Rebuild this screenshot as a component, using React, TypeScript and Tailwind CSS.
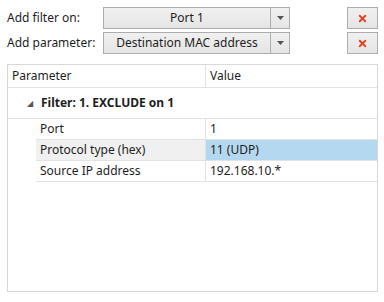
import { X } from "lucide-react";

const font = { fontFamily: '"Noto Sans", "Open Sans", sans-serif' };

function Combo({ value }: { value: string }) {
  return (
    <div className="flex h-[22px] w-[187px] border border-[#adadad] bg-gradient-to-b from-[#f0f0f0] to-[#e5e5e5] text-[12px] text-[#1e1e1e]">
      <div className="flex flex-1 items-center justify-center">{value}</div>
      <div className="flex w-[19px] items-center justify-center border-l border-[#adadad]">
        <svg width="7" height="4" viewBox="0 0 7 4">
          <path d="M0 0h7L3.5 4z" fill="#555" />
        </svg>
      </div>
    </div>
  );
}

function RemoveButton() {
  return (
    <button className="ml-auto flex h-[22px] w-[31px] items-center justify-center border border-[#adadad] bg-gradient-to-b from-[#f0f0f0] to-[#e5e5e5]">
      <X className="h-[11px] w-[11px] text-[#e8401c]" strokeWidth={4} />
    </button>
  );
}

const rows = [
  { name: "Port", value: "1" },
  { name: "Protocol type (hex)", value: "11 (UDP)", selected: true },
  { name: "Source IP address", value: "192.168.10.*" },
];

export default function App() {
  return (
    <div className="h-[302px] w-[384px] bg-white pt-[7px] pl-[7px] pr-[6px]" style={font}>
      {/* FILTER CONTROLS */}
      <div className="flex items-center">
        <span className="w-[96px] text-[12px] text-[#1e1e1e]">Add filter on:</span>
        <Combo value="Port 1" />
        <RemoveButton />
      </div>
      <div className="mt-[3px] flex items-center">
        <span className="w-[96px] text-[12px] text-[#1e1e1e]">Add parameter:</span>
        <Combo value="Destination MAC address" />
        <RemoveButton />
      </div>

      {/* GRID */}
      <div className="mt-[10px] h-[228px] border border-[#d9d9d9] text-[12px] text-[#1e1e1e]">
        <div className="flex h-[23px] border-b border-[#e3e3e3]">
          <div className="flex w-[198px] items-center border-r border-[#e3e3e3] pl-[4px]">Parameter</div>
          <div className="flex flex-1 items-center pl-[4px]">Value</div>
        </div>
        <div className="flex h-[31px] items-center border-b border-[#e3e3e3]">
          <span className="ml-[19px] w-[14px] text-[8px] text-[#555]">◢</span>
          <span className="font-bold">Filter: 1. EXCLUDE on 1</span>
        </div>
        <div className="pl-[28px]">
          {rows.map((r) => (
            <div key={r.name} className="flex h-[21px] border-b border-[#e3e3e3]">
              <div className={`flex w-[170px] items-center border-r border-[#e3e3e3] pl-[4px] ${r.selected ? "bg-[#f0f0f0]" : ""}`}>
                {r.name}
              </div>
              <div className={`flex flex-1 items-center pl-[4px] ${r.selected ? "bg-[#b5d8f1]" : ""}`}>
                {r.value}
              </div>
            </div>
          ))}
        </div>
      </div>
    </div>
  );
}
